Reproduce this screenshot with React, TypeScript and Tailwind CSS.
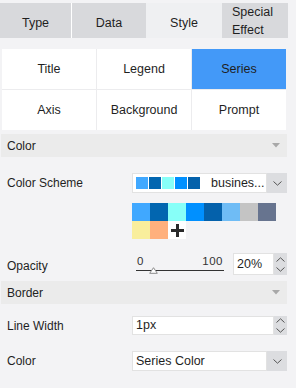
import React from 'react';

const font = { fontFamily: '"Liberation Sans", Arial, sans-serif' };

function Chevron({ up = false }: { up?: boolean }) {
  return (
    <svg width="9" height="5" viewBox="0 0 9 5" className="block">
      <path
        d={up ? 'M0.5 4.5 L4.5 0.8 L8.5 4.5' : 'M0.5 0.5 L4.5 4.2 L8.5 0.5'}
        fill="none"
        stroke="#555"
        strokeWidth="1"
      />
    </svg>
  );
}

function SectionHeader({ title, className = '' }: { title: string; className?: string }) {
  return (
    <div className={`ml-px w-[286px] h-[23px] bg-[#ebebeb] flex items-center justify-between pl-[6px] pr-[7px] ${className}`}>
      <span className="text-[12px] text-[#222]">{title}</span>
      <svg width="8" height="5" viewBox="0 0 8 5">
        <path d="M0 0 L8 0 L4 4.5 Z" fill="#a8a8a8" />
      </svg>
    </div>
  );
}

function SelectBox({ children, className = '' }: { children: React.ReactNode; className?: string }) {
  return (
    <div className={`flex w-[155px] h-[20px] ${className}`}>
      <div className="flex-1 bg-white border border-[#e2e2e2] flex items-center overflow-hidden">{children}</div>
      <div className="w-[20px] bg-[#dcdde0] flex items-center justify-center">
        <Chevron />
      </div>
    </div>
  );
}

function Spinner() {
  return (
    <div className="w-[13px] bg-[#dcdde0] flex flex-col items-center justify-center gap-[5px]">
      <Chevron up />
      <Chevron />
    </div>
  );
}

const schemePreview = ['#40a8ff', '#0266b0', '#87fff8', '#0090ff', '#0461ab'];
const palette = ['#40a8ff', '#0266b0', '#87fff8', '#0090ff', '#0461ab', '#6fbcf5', '#c4c4c4', '#67748f'];

export default function App() {
  const tabs = [
    { label: 'Type', w: 'w-[72px]', cls: 'bg-[#d8d9dc] border-r border-white justify-center' },
    { label: 'Data', w: 'w-[74px]', cls: 'bg-[#d8d9dc] justify-center' },
    { label: 'Style', w: 'w-[76px]', cls: 'bg-[#eff0f2] justify-center' },
  ];
  const cells = ['Title', 'Legend', 'Series', 'Axis', 'Background', 'Prompt'];

  return (
    <div className="w-[296px] h-[388px] bg-[#f3f3f5] pt-[3px] text-[#1f1f1f] overflow-hidden" style={font}>
      {/* tabs */}
      <div className="flex h-[35px] w-[288px]">
        {tabs.map((t) => (
          <div key={t.label} className={`${t.w} ${t.cls} flex items-center pt-[6px] text-[12.5px]`}>
            {t.label}
          </div>
        ))}
        <div className="w-[66px] bg-[#d8d9dc] flex flex-col justify-center pl-[10px] text-[12.5px] leading-[18px] pt-[1px]">
          <span>Special</span>
          <span>Effect</span>
        </div>
      </div>

      {/* sub tabs */}
      <div className="mt-[11px] ml-[2px] w-[284px] grid grid-cols-3 gap-px bg-[#ececee]">
        {cells.map((c) => (
          <div
            key={c}
            className={`h-[40px] flex items-center justify-center text-[12.5px] ${c === 'Series' ? 'bg-[#4399f8]' : 'bg-white'}`}
          >
            {c}
          </div>
        ))}
      </div>

      <SectionHeader title="Color" className="mt-[4px]" />

      {/* color scheme */}
      <div className="mt-[16px] flex items-center h-[20px]">
        <span className="w-[132px] pl-[7px] text-[12px]">Color Scheme</span>
        <SelectBox>
          <div className="flex gap-px pl-[3px]">
            {schemePreview.map((c, i) => (
              <div key={i} className="w-[12px] h-[12px]" style={{ backgroundColor: c }} />
            ))}
          </div>
          <span className="ml-[11px] text-[12.5px] whitespace-nowrap">busines...</span>
        </SelectBox>
      </div>

      {/* palette */}
      <div className="mt-[10px] ml-[132px] flex flex-col">
        <div className="flex">
          {palette.map((c, i) => (
            <div key={i} className="w-[18px] h-[18px]" style={{ backgroundColor: c }} />
          ))}
        </div>
        <div className="flex">
          <div className="w-[18px] h-[18px] bg-[#f9ee9c]" />
          <div className="w-[18px] h-[18px] bg-[#ffb07d]" />
          <div className="w-[18px] h-[18px] bg-white flex items-center justify-center">
            <svg width="15" height="15" viewBox="0 0 15 15">
              <path d="M7.5 1 V14 M1 7.5 H14" stroke="#2a2a2a" strokeWidth="3" />
            </svg>
          </div>
        </div>
      </div>

      {/* opacity */}
      <div className="mt-[14px] flex items-center h-[22px]">
        <span className="w-[132px] pl-[7px] pt-[3px] text-[12px]">Opacity</span>
        <div className="relative w-[96px] h-[22px] pl-[4px] pr-[4px]">
          <div className="flex justify-between text-[11.5px] leading-[12px] pt-[2px] px-[1px] text-[#333]">
            <span>0</span>
            <span className="tracking-[0.5px]">100</span>
          </div>
          <div className="mt-[3px] h-px bg-[#333]" />
          <svg width="9" height="7" viewBox="0 0 9 7" className="absolute left-[17px] top-[14px]">
            <path d="M4.5 0.7 L8.3 6.3 L0.7 6.3 Z" fill="#fff" stroke="#8a8a8a" strokeWidth="1" />
          </svg>
        </div>
        <div className="ml-[5px] flex h-[22px]">
          <div className="w-[41px] bg-white border border-[#e2e2e2] flex items-center pl-[3px] text-[12.5px]">20%</div>
          <Spinner />
        </div>
      </div>

      <SectionHeader title="Border" className="mt-[6px]" />

      {/* line width */}
      <div className="mt-[12px] flex items-center h-[19px]">
        <span className="w-[132px] pl-[7px] text-[12px]">Line Width</span>
        <div className="flex h-[19px] w-[155px]">
          <div className="flex-1 bg-white border border-[#e2e2e2] flex items-center pl-[3px] text-[12.5px]">1px</div>
          <Spinner />
        </div>
      </div>

      {/* color */}
      <div className="mt-[16px] flex items-center h-[20px]">
        <span className="w-[132px] pl-[7px] text-[12px]">Color</span>
        <SelectBox>
          <span className="pl-[3px] text-[12.5px]">Series Color</span>
        </SelectBox>
      </div>
    </div>
  );
}
